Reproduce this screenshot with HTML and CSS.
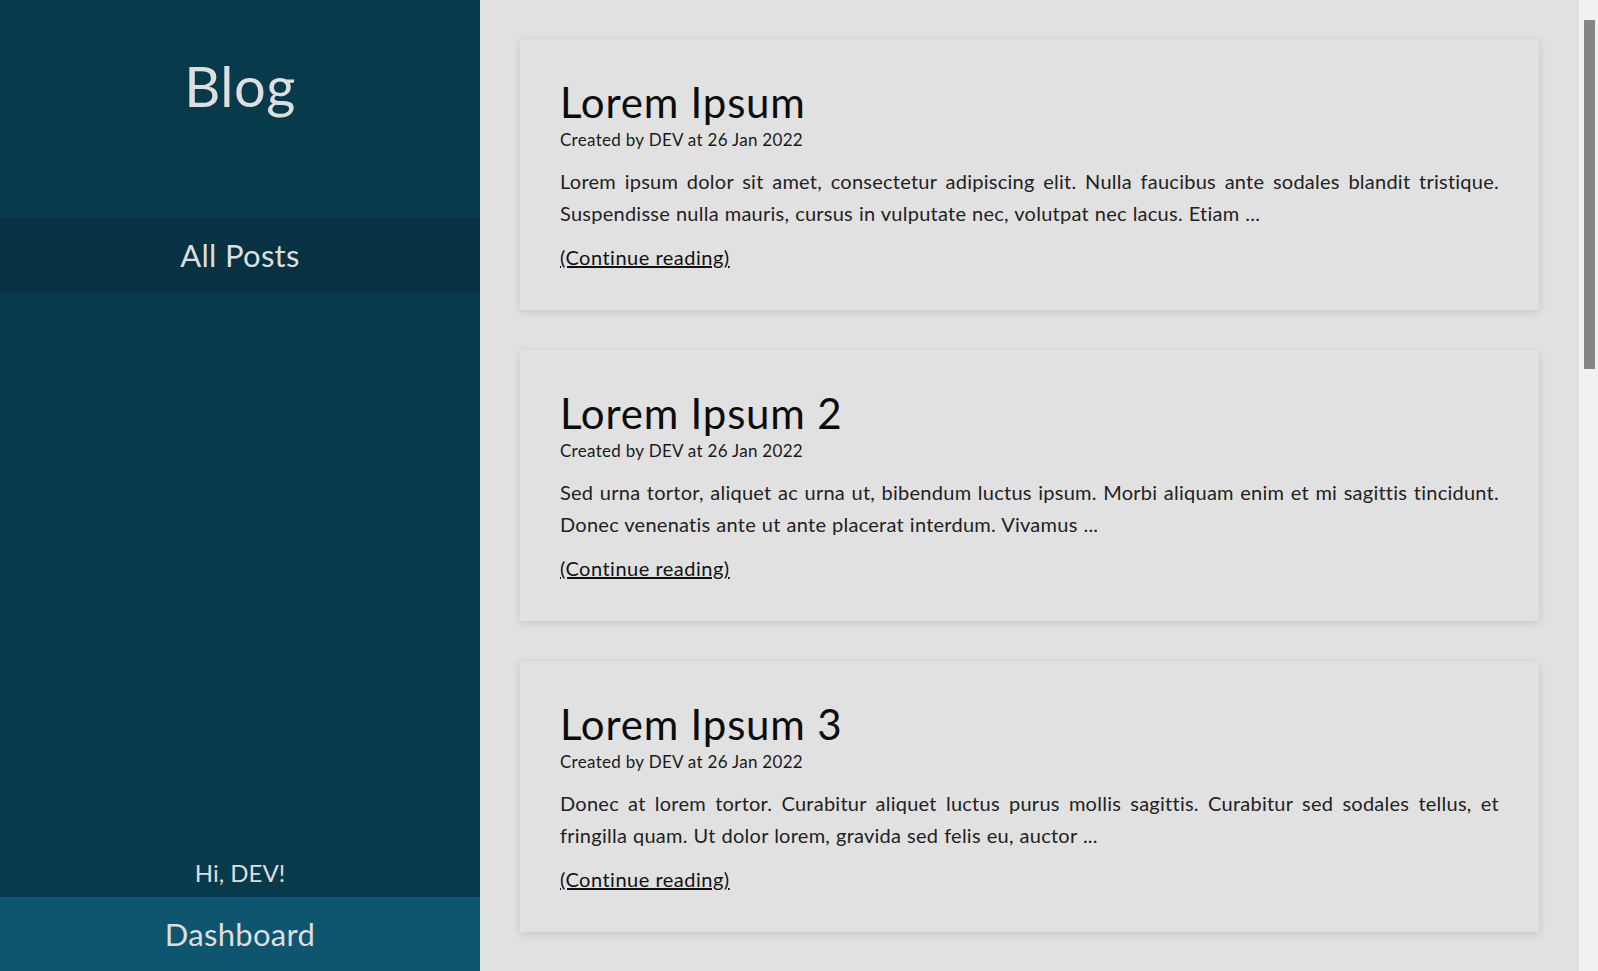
FILE: index.html
```html
<!DOCTYPE html>
<html lang="en">
<head>
<meta charset="utf-8">
<title>Blog</title>
<link rel="stylesheet" href="styles.css">
</head>
<body>
<div class="app">
  <aside class="sidebar">
    <div class="brand">Blog</div>
    <nav class="nav">
      <a class="nav-item active" href="#">All Posts</a>
    </nav>
    <div class="spacer"></div>
    <div class="greeting">Hi, DEV!</div>
    <a class="dashboard" href="#">Dashboard</a>
  </aside>
  <main class="main">
    <article class="card">
      <h2 class="title">Lorem Ipsum</h2>
      <div class="meta">Created by DEV at 26 Jan 2022</div>
      <p class="excerpt">Lorem ipsum dolor sit amet, consectetur adipiscing elit. Nulla faucibus ante sodales blandit tristique. Suspendisse nulla mauris, cursus in vulputate nec, volutpat nec lacus. Etiam ...</p>
      <a class="more" href="#">(Continue reading)</a>
    </article>
    <article class="card">
      <h2 class="title">Lorem Ipsum 2</h2>
      <div class="meta">Created by DEV at 26 Jan 2022</div>
      <p class="excerpt">Sed urna tortor, aliquet ac urna ut, bibendum luctus ipsum. Morbi aliquam enim et mi sagittis tincidunt. Donec venenatis ante ut ante placerat interdum. Vivamus ...</p>
      <a class="more" href="#">(Continue reading)</a>
    </article>
    <article class="card">
      <h2 class="title">Lorem Ipsum 3</h2>
      <div class="meta">Created by DEV at 26 Jan 2022</div>
      <p class="excerpt">Donec at lorem tortor. Curabitur aliquet luctus purus mollis sagittis. Curabitur sed sodales tellus, et fringilla quam. Ut dolor lorem, gravida sed felis eu, auctor ...</p>
      <a class="more" href="#">(Continue reading)</a>
    </article>
  </main>
  <div class="scrollbar" aria-hidden="true">
    <div class="scroll-thumb"></div>
  </div>
</div>
</body>
</html>
```

FILE: styles.css
```css
* {
  box-sizing: border-box;
}

html, body {
  margin: 0;
  padding: 0;
  height: 100%;
  overflow: hidden;
}

body {
  font-family: "Lato", "Open Sans", sans-serif;
  background: #e1e1e1;
}

.app {
  display: flex;
  height: 100vh;
}

.sidebar {
  width: 480px;
  flex: 0 0 480px;
  background: #073a4b;
  color: #dedede;
  display: flex;
  flex-direction: column;
  text-align: center;
}

.brand {
  height: 218px;
  padding-top: 52px;
  font-size: 56px;
  line-height: 1.2;
  letter-spacing: 0.5px;
}

.nav {
  display: flex;
  flex-direction: column;
}

.nav-item {
  display: block;
  height: 75px;
  line-height: 75px;
  font-size: 31px;
  letter-spacing: 0.3px;
  color: #dedede;
  text-decoration: none;
}

.nav-item.active {
  background: #063243;
}

.spacer {
  flex: 1;
}

.greeting {
  font-size: 24px;
  line-height: 30px;
  margin-bottom: 9px;
}

.dashboard {
  display: block;
  height: 74px;
  line-height: 74px;
  font-size: 31px;
  letter-spacing: 0.3px;
  background: #0e5570;
  color: #dedede;
  text-decoration: none;
}

.main {
  flex: 1;
  height: 100vh;
  overflow: hidden;
  padding: 39px 40px 0 40px;
}

.scrollbar {
  flex: 0 0 19px;
  background: #f1f1f1;
  padding: 20px 3px 0 5px;
}

.scroll-thumb {
  height: 349px;
  background: #858585;
}

.card {
  background: #e1e1e1;
  box-shadow: 0 2px 8px rgba(0, 0, 0, 0.12);
  padding: 40px 40px 37px 40px;
  margin-bottom: 40px;
  color: #1e1e1e;
}

.title {
  margin: 0;
  font-size: 42px;
  line-height: 46px;
  letter-spacing: 0.8px;
  font-weight: 400;
  color: #0c0c0c;
}

.meta {
  margin-top: 5px;
  font-size: 17px;
  line-height: 20px;
  letter-spacing: 0.3px;
  color: #1a1a1a;
}

.excerpt {
  margin: 15px 0 0;
  font-size: 20px;
  line-height: 32px;
  letter-spacing: 0.25px;
  word-spacing: 0.5px;
  text-align: justify;
  color: #222;
}

.more {
  display: inline-block;
  margin-top: 12px;
  font-size: 20px;
  line-height: 32px;
  letter-spacing: 0.5px;
  color: #111;
  text-decoration: underline;
}
```
